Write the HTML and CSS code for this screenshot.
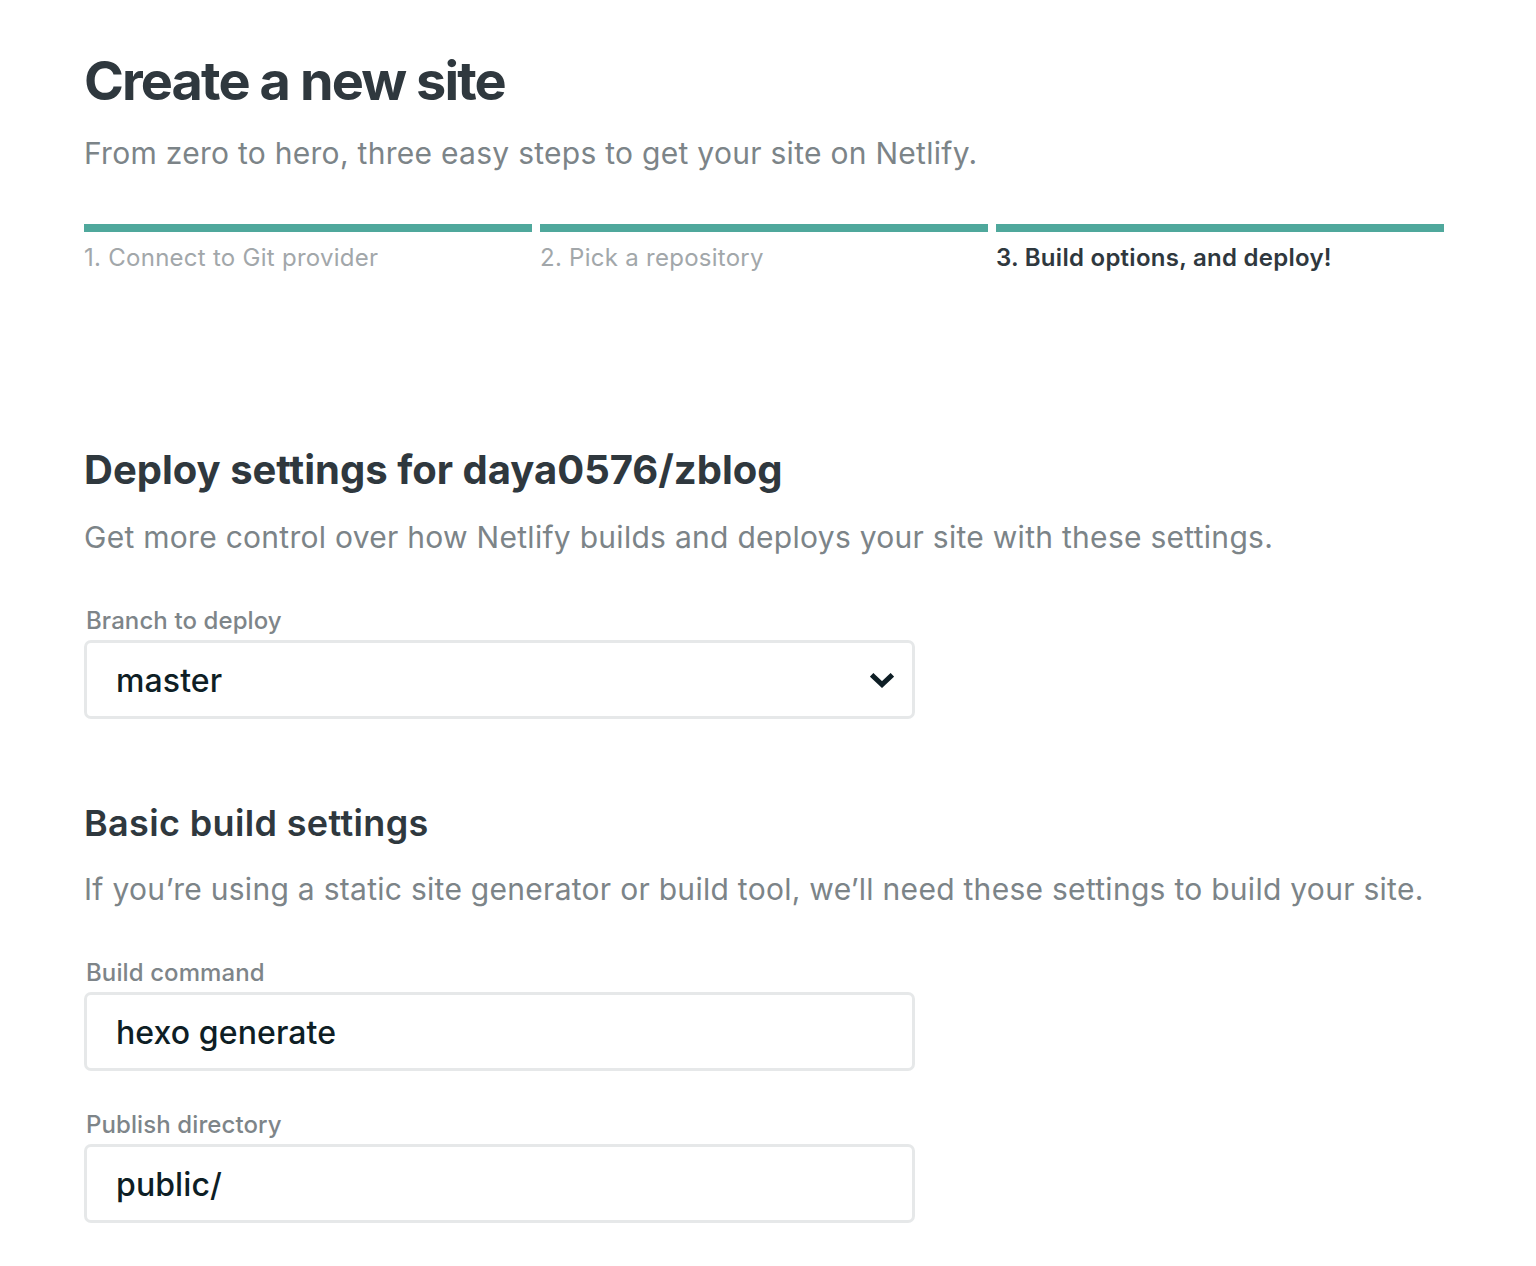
FILE: index.html
```html
<!DOCTYPE html>
<html lang="en">
<head>
<meta charset="utf-8">
<title>Create a new site</title>
<link rel="stylesheet" href="styles.css">
</head>
<body>
<main class="page">
  <header class="intro">
    <h1 class="title">Create a new site</h1>
    <p class="lead">From zero to hero, three easy steps to get your site on Netlify.</p>
  </header>
  <ol class="steps">
    <li class="step">1. Connect to Git provider</li>
    <li class="step">2. Pick a repository</li>
    <li class="step step-active">3. Build options, and deploy!</li>
  </ol>

  <section class="section section-deploy">
    <h2 class="h2">Deploy settings for daya0576/zblog</h2>
    <p class="lead">Get more control over how Netlify builds and deploys your site with these settings.</p>
    <div class="field">
      <label class="label">Branch to deploy</label>
      <div class="box">
        <span class="value">master</span>
        <svg class="chev" width="24" height="16" viewBox="0 0 24 16"><path d="M3.5 3.5 L12 11.5 L20.5 3.5" fill="none" stroke="#0e1e25" stroke-width="5" stroke-linecap="square" stroke-linejoin="miter"/></svg>
      </div>
    </div>
  </section>

  <section class="section section-basic">
    <h3 class="h3">Basic build settings</h3>
    <p class="lead">If you’re using a static site generator or build tool, we’ll need these settings to build your site.</p>
    <div class="field">
      <label class="label">Build command</label>
      <div class="box"><span class="value">hexo generate</span></div>
    </div>
    <div class="field field-next">
      <label class="label">Publish directory</label>
      <div class="box"><span class="value">public/</span></div>
    </div>
  </section>
</main>
</body>
</html>
```
FILE: styles.css
```css
* { box-sizing: border-box; }
html, body { margin: 0; padding: 0; background: #fff; }
body { font-family: Inter, "Noto Sans", sans-serif; color: #2f3a40; }
.page { width: 1360px; margin-left: 84px; padding-top: 48px; }
.title { margin: 0; font-size: 54px; font-weight: 700; letter-spacing: -1.9px; line-height: 66px; color: #2f383e; }
.lead { margin: 0; font-size: 30px; font-weight: 400; color: #7c8488; letter-spacing: 0.28px; line-height: 40px; }
.intro .lead { margin-top: 19px; }
.steps { list-style: none; margin: 51px 0 0; padding: 0; display: grid; grid-template-columns: repeat(3, 1fr); gap: 8px; }
.step { border-top: 8px solid #4fa89c; padding-top: 10px; font-size: 24px; line-height: 32px; color: #a2a7aa; letter-spacing: 0.27px; }
.step-active { color: #2f383e; font-weight: 600; }
.section-deploy { margin-top: 170px; }
.h2 { margin: 0; font-size: 40px; font-weight: 700; letter-spacing: 0; line-height: 52px; color: #2f383e; }
.section-deploy .lead { margin-top: 21px; }
.field { margin-top: 49px; }
.field-next { margin-top: 39px; }
.label { display: block; font-size: 24px; font-weight: 500; color: #7e8589; line-height: 30px; margin-left: 2px; letter-spacing: 0.1px; }
.box { margin-top: 4px; width: 831px; height: 79px; border: 3px solid #e6e8e9; border-radius: 7px; display: flex; align-items: center; justify-content: space-between; padding: 2px 18px 0 29px; }
.value { font-size: 32px; font-weight: 500; color: #0e1e25; letter-spacing: 0.1px; }
.chev { display: block; }
.section-basic { margin-top: 80px; }
.h3 { margin: 0; font-size: 36px; font-weight: 600; letter-spacing: 0.35px; line-height: 48px; color: #2f383e; }
.section-basic .lead { margin-top: 22px; }
```
